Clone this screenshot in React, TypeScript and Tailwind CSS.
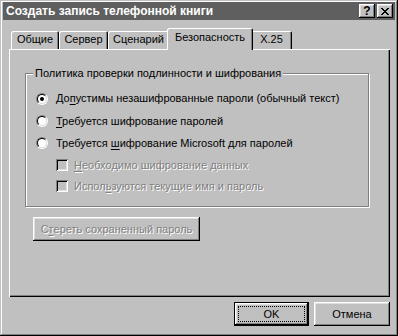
import React from "react";

const raised =
  "shadow-[inset_-1px_-1px_0_#000,inset_1px_1px_0_#fff,inset_-2px_-2px_0_#808080,inset_2px_2px_0_#dfdfdf]";

function U({ children }: { children: React.ReactNode }) {
  return <span className="underline underline-offset-[2px]">{children}</span>;
}

function Radio({ checked }: { checked?: boolean }) {
  return (
    <div className="w-[12px] h-[12px] shrink-0 rounded-full border border-t-[#808080] border-l-[#808080] border-b-white border-r-white flex">
      <div className="flex-1 rounded-full border border-t-black border-l-black border-b-[#dfdfdf] border-r-[#dfdfdf] bg-white flex items-center justify-center">
        {checked && <div className="w-[4px] h-[4px] rounded-full bg-black" />}
      </div>
    </div>
  );
}

function Check() {
  return (
    <div className="w-[12px] h-[12px] shrink-0 shadow-[inset_1px_1px_0_#808080,inset_-1px_-1px_0_#fff,inset_2px_2px_0_#000,inset_-2px_-2px_0_#dfdfdf] bg-[#c0c0c0]" />
  );
}

const disabled = "text-[#808080] [text-shadow:1px_1px_0_#fff]";

function Tab({ label, w, selected }: { label: string; w: string; selected?: boolean }) {
  if (selected) {
    return (
      <div
        className={`relative z-10 -mx-[2px] -mb-[1px] h-[22px] ${w} bg-[#c0c0c0] rounded-t-[2px] shadow-[inset_1px_1px_0_#fff,inset_-1px_0_0_#000,inset_-2px_0_0_#808080] flex justify-center pt-[3px]`}
      >
        {label}
      </div>
    );
  }
  return (
    <div
      className={`h-[18px] ${w} rounded-t-[2px] shadow-[inset_1px_1px_0_#fff,inset_-1px_0_0_#000,inset_-2px_0_0_#808080] flex justify-center pt-[2px]`}
    >
      {label}
    </div>
  );
}

export default function App() {
  return (
    <div className="w-[398px] h-[336px] bg-[#c0c0c0] shadow-[inset_-1px_-1px_0_#000,inset_1px_1px_0_#c0c0c0,inset_-2px_-2px_0_#808080,inset_2px_2px_0_#fff] pt-[2px] px-[3px] font-['Liberation_Sans',Arial,sans-serif] text-[11px] leading-[13px] text-black flex flex-col">
      {/* title bar */}
      <div className="h-[18px] bg-[#5f5f5f] flex items-center pl-[3px] pr-[2px]">
        <div className="flex-1 text-white font-bold text-[12px]">
          Создать запись телефонной книги
        </div>
        <div className={`w-[16px] h-[14px] bg-[#c0c0c0] ${raised} flex items-center justify-center font-bold text-[12px] leading-none`}>
          ?
        </div>
        <div className={`ml-[2px] w-[16px] h-[14px] bg-[#c0c0c0] ${raised} flex items-center justify-center`}>
          <svg width="8" height="7" viewBox="0 0 8 7" shapeRendering="crispEdges">
            <path d="M0 0h2v1H0zM6 0h2v1H6zM1 1h2v1H1zM5 1h2v1H5zM2 2h4v1H2zM3 3h2v1H3zM2 4h4v1H2zM1 5h2v1H1zM5 5h2v1H5zM0 6h2v1H0zM6 6h2v1H6z" fill="#000" />
          </svg>
        </div>
      </div>

      {/* body */}
      <div className="pl-[6px] pt-[8px] flex flex-col">
        {/* tabs */}
        <div className="h-[21px] flex items-end pl-[2px]">
          <Tab label="Общие" w="w-[48px]" />
          <Tab label="Сервер" w="w-[49px]" />
          <Tab label="Сценарий" w="w-[61px]" />
          <Tab label="Безопасность" w="w-[86px]" selected />
          <Tab label="X.25" w="w-[41px]" />
        </div>
        {/* panel */}
        <div className="w-[381px] h-[248px] shadow-[inset_1px_1px_0_#fff,inset_-1px_-1px_0_#000,inset_-2px_-2px_0_#808080] pl-[16px] pt-[18px]">
          <fieldset className="w-[344px] h-[140px] border border-[#808080] shadow-[1px_1px_0_#fff,inset_1px_1px_0_#fff] m-0 p-0">
            <legend className="ml-[7px] px-[2px] bg-[#c0c0c0]">Политика проверки подлинности и шифрования</legend>
            <div className="flex flex-col pl-[10px] pt-[7px]">
              <div className="h-[23px] flex items-center gap-[8px]">
                <Radio checked />
                <span>
                  До<U>п</U>устимы незашифрованные пароли (обычный текст)
                </span>
              </div>
              <div className="h-[22px] flex items-center gap-[8px]">
                <Radio />
                <span>
                  <U>Т</U>ребуется шифрование паролей
                </span>
              </div>
              <div className="h-[22px] flex items-center gap-[8px]">
                <Radio />
                <span>
                  Требуется <U>ш</U>ифрование Microsoft для паролей
                </span>
              </div>
              <div className="h-[22px] flex items-center gap-[6px] pl-[20px]">
                <Check />
                <span className={disabled}>
                  <U>Н</U>еобходимо шифрование данных
                </span>
              </div>
              <div className="h-[20px] flex items-center gap-[6px] pl-[20px]">
                <Check />
                <span className={disabled}>
                  Испол<U>ь</U>зуются текущие имя и пароль
                </span>
              </div>
            </div>
          </fieldset>
          <div className={`mt-[10px] ml-[8px] w-[167px] h-[24px] ${raised} flex items-center justify-center`}>
            <span className={disabled}>
              С<U>т</U>ереть сохраненный пароль
            </span>
          </div>
        </div>
        {/* buttons */}
        <div className="w-[381px] flex justify-end gap-[5px] mt-[5px]">
          <div className="w-[75px] h-[24px] border border-black">
            <div className={`w-full h-full ${raised} flex items-center justify-center p-[3px]`}>
              <div className="w-full h-full border border-dotted border-black flex items-center justify-center">OK</div>
            </div>
          </div>
          <div className={`w-[76px] h-[24px] ${raised} flex items-center justify-center`}>Отмена</div>
        </div>
      </div>
    </div>
  );
}
